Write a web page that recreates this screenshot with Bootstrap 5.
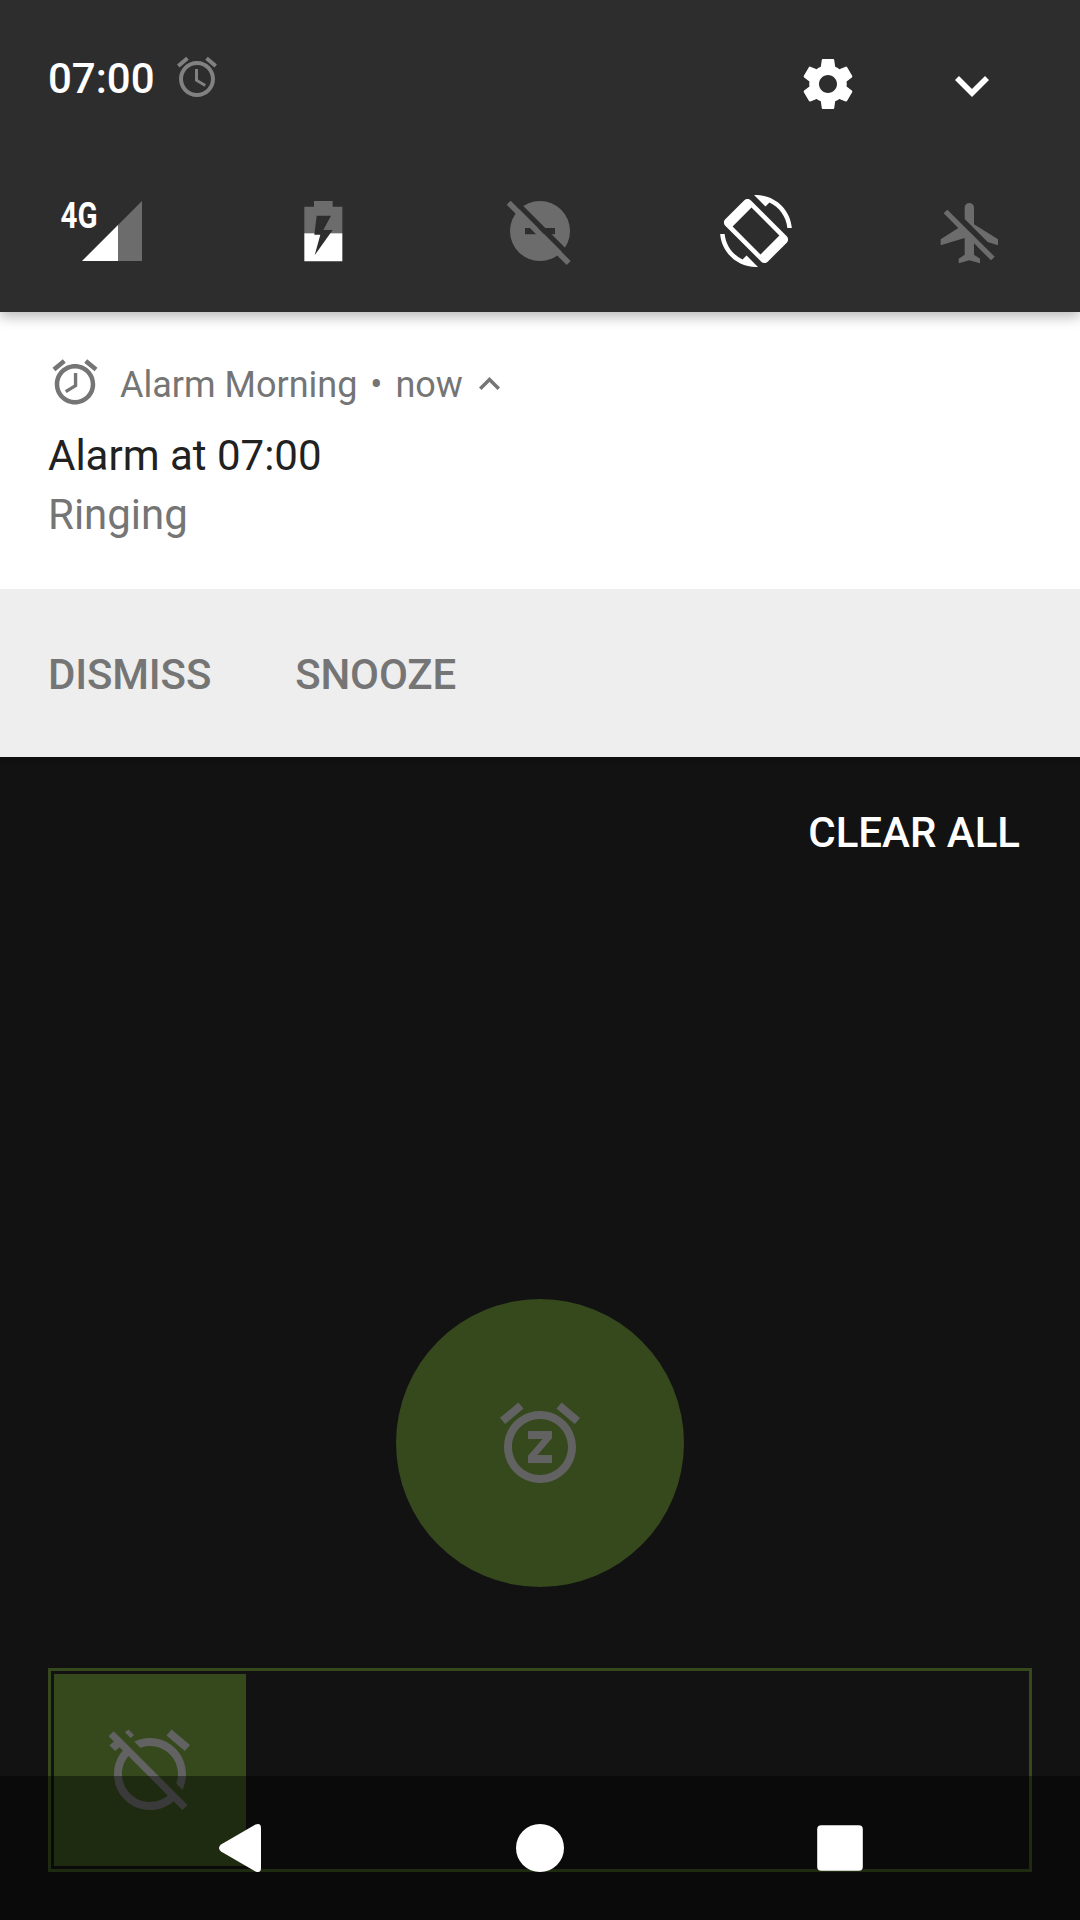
<!DOCTYPE html>
<html lang="en">
<head>
<meta charset="utf-8">
<meta name="viewport" content="width=device-width, initial-scale=1">
<title>Alarm Morning</title>
<link rel="stylesheet" href="https://cdn.jsdelivr.net/npm/bootstrap@5.3.0/dist/css/bootstrap.min.css">
<style>
  body { font-family: Roboto, "Liberation Sans", sans-serif; background: #121212; font-size: 42px; line-height: 50px; }
  svg { display: block; flex: none; }
  .screen { width: 1080px; height: 1920px; overflow: hidden; }
  .quick { background: #2d2d2d; height: 312px; z-index: 2; box-shadow: 0 5px 12px rgba(0,0,0,.27); }
  .quick-top { height: 195px; padding-left: 48px; }
  .clock-group { padding-top: 54px; }
  .clock { width: 125px; font-weight: 500; color: #fff; }
  .status-alarm { margin-top: -1px; color: #818181; }
  .gear { margin-top: 54px; }
  .expand { margin: 76px 91px 0 97px; }
  .dim { color: #6c6c6c; }
  .notice { height: 277px; padding: 43px 48px 0; color: #757575; }
  .notice-app { font-size: 36px; height: 54px; }
  .app-name { margin-left: 18px; padding-top: 5px; }
  .dot { margin: 0 4px; }
  .up { margin: 22px 0 0 16px; }
  .notice-title { color: #212121; margin-top: 22px; }
  .notice-text { margin-top: 9px; }
  .actions { height: 168px; background: #eee; padding: 4px 0 0 48px; gap: 84px; }
  .act { font-size: 42px; line-height: 50px; font-weight: 500; color: #757575; }
  .actions .act { letter-spacing: -.15px; }
  .clear-wrap { padding: 51px 60px 0 0; height: 542px; background: linear-gradient(#0e0e0e, #121212 9px); }
  .snooze { width: 288px; height: 288px; background: #35491d; color: #626262; }
  .track { margin: 81px 48px 0; height: 204px; border: 3px solid #35491d; padding: 3px; }
  .thumb { width: 192px; height: 192px; background: #35491d; color: #626262; }
  .navkeys { height: 144px; background: rgba(0,0,0,.4); padding: 0 90px; z-index: 3; }
</style>
<script src="https://cdn.jsdelivr.net/npm/bootstrap@5.3.0/dist/js/bootstrap.bundle.min.js"></script>
</head>
<body>
<main class="screen position-relative d-flex flex-column">
  <header class="quick position-relative">
    <div class="quick-top d-flex align-items-start">
      <div class="clock-group d-flex align-items-start me-auto">
        <span class="clock">07:00</span>
        <svg class="status-alarm" width="48" height="48" viewBox="0 0 24 24" fill="currentColor"><path d="M22 5.72l-4.6-3.86-1.29 1.53 4.6 3.86L22 5.72zM7.88 3.39L6.6 1.86 2 5.71l1.29 1.53 4.59-3.85zM12.5 8H11v6l4.75 2.85.75-1.23-4-2.37V8zM12 4c-4.97 0-9 4.03-9 9s4.02 9 9 9c4.97 0 9-4.03 9-9s-4.03-9-9-9zm0 16c-3.87 0-7-3.13-7-7s3.13-7 7-7 7 3.13 7 7-3.13 7-7 7z"/></svg>
      </div>
      <svg class="gear" width="60" height="60" viewBox="0 0 24 24" fill="#fff"><path d="M19.43 12.98c.04-.32.07-.64.07-.98s-.03-.66-.07-.98l2.11-1.65c.19-.15.24-.42.12-.64l-2-3.46c-.12-.22-.39-.3-.61-.22l-2.49 1c-.52-.4-1.08-.73-1.69-.98l-.38-2.65C14.46 2.18 14.25 2 14 2h-4c-.25 0-.46.18-.49.42l-.38 2.65c-.61.25-1.17.59-1.69.98l-2.49-1c-.23-.09-.49 0-.61.22l-2 3.46c-.13.22-.07.49.12.64l2.11 1.65c-.04.32-.07.65-.07.98s.03.66.07.98l-2.11 1.65c-.19.15-.24.42-.12.64l2 3.46c.12.22.39.3.61.22l2.49-1c.52.4 1.08.73 1.69.98l.38 2.65c.03.24.24.42.49.42h4c.25 0 .46-.18.49-.42l.38-2.65c.61-.25 1.17-.59 1.69-.98l2.49 1c.23.09.49 0 .61-.22l2-3.46c.12-.22.07-.49-.12-.64l-2.11-1.65zM12 15.6c-1.98 0-3.6-1.62-3.6-3.6s1.62-3.6 3.6-3.6 3.6 1.62 3.6 3.6-1.62 3.6-3.6 3.6z"/></svg>
      <svg class="expand" width="34" height="21" viewBox="6 8.59 12 7.41" fill="#fff"><path d="M16.59 8.59L12 13.17 7.41 8.59 6 10l6 6 6-6z"/></svg>
    </div>
    <div class="row g-0">
      <div class="col d-flex justify-content-center">
        <svg width="96" height="72" viewBox="60 195 96 72"><path d="M82 261L118 225V261z" fill="#fff"/><path d="M118 225L142 201V261H118z" fill="#6c6c6c"/><text x="60.5" y="228" font-size="36" font-weight="700" fill="#fff" textLength="37" lengthAdjust="spacingAndGlyphs">4G</text></svg>
      </div>
      <div class="col d-flex justify-content-center">
        <svg width="72" height="72" viewBox="864 585 216 216"><path d="M942 603H998V620H1027V700H913V620H942z" fill="#6c6c6c"/><path d="M913 700H1027V784H913z" fill="#fff"/><path d="M950 647H993L970 690H998L944 766 961 704H943z" fill="#2d2d2d"/></svg>
      </div>
      <div class="col d-flex justify-content-center dim">
        <svg width="72" height="72" viewBox="432 585 216 216"><circle cx="540" cy="693" r="90" fill="currentColor"/><path d="M495 684H585V703H495zM452 602L474 602 654 782 632 782z" fill="#2d2d2d"/><path d="M452 602L632 783 620 795 440 614z" fill="currentColor"/></svg>
      </div>
      <div class="col d-flex justify-content-center">
        <svg width="72" height="72" viewBox="0 0 24 24" fill="#fff"><path d="M16.48 2.52c3.27 1.55 5.61 4.72 5.97 8.48h1.5C23.44 4.84 18.29 0 12 0l-.66.03 3.81 3.81 1.33-1.32zm-6.25-.77c-.59-.59-1.54-.59-2.12 0L1.75 8.11c-.59.59-.59 1.54 0 2.12l12.02 12.02c.59.59 1.54.59 2.12 0l6.36-6.36c.59-.59.59-1.54 0-2.12L10.23 1.75zM13.5 19.8L4.2 10.5 10.5 4.2 19.8 13.5zM7.52 21.48C4.25 19.94 1.91 16.76 1.55 13H.05C.56 19.16 5.71 24 12 24l.66-.03-3.81-3.81-1.33 1.32z"/></svg>
      </div>
      <div class="col d-flex justify-content-center dim">
        <svg width="72" height="72" viewBox="648 585 216 216" fill="currentColor"><path d="M734 657V623a14 14 0 0 1 28 0V673L834 718V736L803 726z"/><path d="M682 629L824 770 813 781 762 730V764L780 776V790L748 781 716 790V776L734 764V714L662 736V718L715 684 671 640z"/></svg>
      </div>
    </div>
  </header>

  <section class="notice bg-white">
    <div class="notice-app d-flex align-items-start">
      <svg width="54" height="54" viewBox="0 0 24 24" fill="currentColor"><path d="M22 5.72l-4.6-3.86-1.29 1.53 4.6 3.86L22 5.72zM7.88 3.39L6.6 1.86 2 5.71l1.29 1.53 4.59-3.85zM11.5 8H13v6l-4.75 2.85-.75-1.23 4-2.37V8zM12 4c-4.97 0-9 4.03-9 9s4.02 9 9 9c4.97 0 9-4.03 9-9s-4.03-9-9-9zm0 16c-3.87 0-7-3.13-7-7s3.13-7 7-7 7 3.13 7 7-3.13 7-7 7z"/></svg>
      <span class="app-name">Alarm Morning&nbsp;<span class="dot">•</span>&nbsp;now</span>
      <svg class="up" width="21" height="13" viewBox="6 8 12 7.41" fill="currentColor"><path d="M12 8l-6 6 1.41 1.41L12 10.83l4.59 4.58L18 14z"/></svg>
    </div>
    <div class="notice-title">Alarm at 07:00</div>
    <div class="notice-text">Ringing</div>
  </section>

  <div class="actions d-flex align-items-center">
    <button class="act btn p-0 border-0">DISMISS</button>
    <button class="act btn p-0 border-0">SNOOZE</button>
  </div>

  <div class="clear-wrap d-flex justify-content-end align-items-start">
    <button class="act btn p-0 border-0 text-white">CLEAR ALL</button>
  </div>

  <div class="snooze rounded-circle mx-auto d-flex align-items-center justify-content-center">
    <svg width="96" height="96" viewBox="0 0 24 24" fill="currentColor"><path d="M22 5.72l-4.6-3.86-1.29 1.53 4.6 3.86L22 5.72zM7.88 3.39L6.6 1.86 2 5.71l1.29 1.53 4.59-3.85zM12 4c-4.97 0-9 4.03-9 9s4.02 9 9 9c4.97 0 9-4.03 9-9s-4.03-9-9-9zm0 16c-3.87 0-7-3.13-7-7s3.13-7 7-7 7 3.13 7 7-3.13 7-7 7zM9 11h3.63L9 15.2V17h6v-2h-3.63L15 10.8V9H9v2z"/></svg>
  </div>

  <div class="track">
    <div class="thumb d-flex align-items-center justify-content-center">
      <svg width="96" height="96" viewBox="0 0 24 24" fill="currentColor"><path d="M12 6c3.87 0 7 3.13 7 7 0 .84-.16 1.65-.43 2.4l1.52 1.52c.58-1.19.91-2.51.91-3.92 0-4.97-4.03-9-9-9-1.41 0-2.73.33-3.92.91L9.6 6.43C10.35 6.16 11.16 6 12 6zm10-.28l-4.6-3.86-1.29 1.53 4.6 3.86L22 5.72zM2.92 2.29L1.65 3.57 2.98 4.9l-1.11.93 1.42 1.42 1.11-.94.8.8C3.83 8.69 3 10.75 3 13c0 4.97 4.02 9 9 9 2.25 0 4.31-.83 5.89-2.2l2.2 2.2 1.27-1.27L3.89 3.27l-.97-.98zm13.55 16.1C15.26 19.39 13.7 20 12 20c-3.87 0-7-3.13-7-7 0-1.7.61-3.26 1.61-4.47l9.86 9.86zM8.02 3.28L6.6 1.86l-.86.71 1.42 1.42.86-.71z"/></svg>
    </div>
  </div>

  <nav class="navkeys position-absolute bottom-0 start-0 w-100">
    <div class="row g-0 h-100 align-items-center">
      <div class="col d-flex justify-content-center"><svg width="48" height="48" viewBox="216 1824 48 48"><path d="M255.500 1824.600Q261 1822.600 261 1828V1868Q261 1873.400 255.500 1871.400L221 1851.500Q217 1848 221 1844.500z" fill="#fff"/></svg></div>
      <div class="col d-flex justify-content-center"><svg width="48" height="48" viewBox="0 0 48 48"><circle cx="24" cy="24" r="24" fill="#fff"/></svg></div>
      <div class="col d-flex justify-content-center"><svg width="48" height="48" viewBox="0 0 48 48"><rect x="1.200" y="1.200" width="45.600" height="45.600" rx="4" fill="#fff"/></svg></div>
    </div>
  </nav>
</main>
</body>
</html>
